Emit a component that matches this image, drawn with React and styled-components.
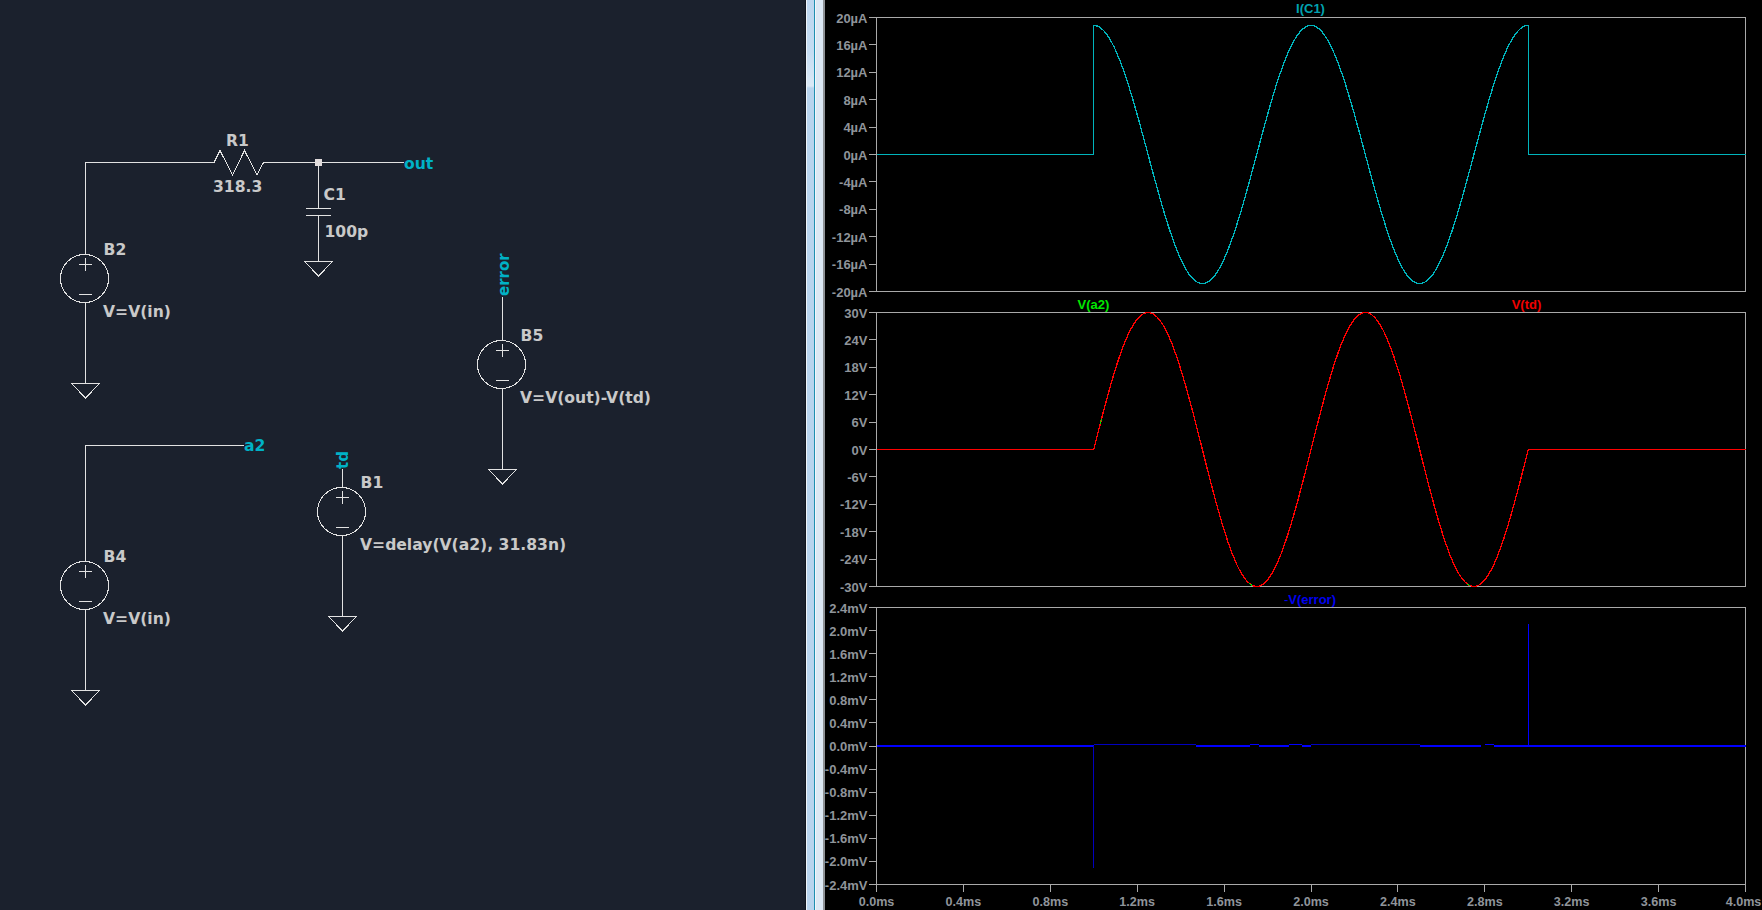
import React from 'react';
import styled, { createGlobalStyle } from 'styled-components';

const GlobalStyle = createGlobalStyle`
html, body {
  margin: 0;
  padding: 0;
  background: #000;
  overflow: hidden;
}
`
const Page = styled.div`
display: flex;
width: 100vw;
height: 100vh;
overflow: hidden;
`
const SchematicPane = styled.div`
flex: 0 0 805px;
background-color: #1b212d;
`
const Splitter = styled.div`
flex: 0 0 20px;
display: flex;
`
const Strip = styled.div`
flex: 0 0 ${p => p.$w}px;
background: ${p => p.$bg};
`
const PlotPane = styled.div`
flex: 1;
display: flex;
flex-direction: column;
background-color: #000;
`
const Drawing = styled.svg`
display: block;
overflow: visible;
`
const Wire = styled.polyline`
fill: none;
stroke: #e2e2e2;
stroke-width: 1;
shape-rendering: crispEdges;
`
const Outline = styled.circle`
fill: none;
stroke: #e2e2e2;
stroke-width: 1;
shape-rendering: crispEdges;
`
const Junction = styled.rect`
fill: #e2dcdc;
`
const PartLabel = styled.text`
font-family: "DejaVu Sans", sans-serif;
font-weight: 700;
font-size: 15.6px;
fill: #c9c9c9;
`
const NetLabel = styled(PartLabel)`
fill: #00b2c6;
`
const SideNetLabel = styled(NetLabel)`
font-size: 15px;
`
const FrameLine = styled.path`
fill: none;
stroke: #a9a9a9;
stroke-width: 1;
shape-rendering: crispEdges;
`
const TickLabel = styled.text`
font-family: "Liberation Sans", Arial, sans-serif;
font-weight: 700;
font-size: 13px;
fill: #8f949a;
text-anchor: end;
`
const TimeLabel = styled(TickLabel)`
font-size: 12.6px;
text-anchor: middle;
`
const TraceTitle = styled.text`
font-family: "Liberation Sans", Arial, sans-serif;
font-weight: 700;
font-size: 13px;
fill: ${p => p.$color};
text-anchor: middle;
`
const Trace = styled.polyline`
fill: none;
stroke: ${p => p.$color};
stroke-width: ${p => p.$w};
shape-rendering: crispEdges;
`

// schematic parts, x is the wire column
const Ground = ({ x, y }) => (
  <>
    <Wire points={`${x - 14},${y} ${x + 14},${y} ${x},${y + 14.5} ${x - 14},${y}`} />
  </>
)

const BSource = ({ x, y, top, bottom, name, value }) => (
  <>
    <Wire points={`${x},${top} ${x},${y - 24}`} />
    <Outline cx={x - 1} cy={y} r="24" />
    <Wire points={`${x - 6.5},${y - 14} ${x + 6.5},${y - 14}`} />
    <Wire points={`${x},${y - 20.5} ${x},${y - 7.5}`} />
    <Wire points={`${x - 6.5},${y + 16} ${x + 6.5},${y + 16}`} />
    <Wire points={`${x},${y + 24} ${x},${bottom}`} />
    <Ground x={x} y={bottom} />
    <PartLabel x={x + 18} y={y - 23.5}>{name}</PartLabel>
    <PartLabel x={x + 17.5} y={y + 38}>{value}</PartLabel>
  </>
)

const Schematic = () => (
  <Drawing width="805" height="910">
    <Wire points="85.5,254 85.5,162.5 214,162.5 220,150.5 232.5,175 244.5,150.5 257,175 263.5,162.5 404,162.5" />
    <Junction x="315" y="159" width="7" height="7" />
    <Wire points="318.5,162.5 318.5,208.5" />
    <Wire points="306,208.5 331,208.5" />
    <Wire points="306,215.5 331,215.5" />
    <Wire points="318.5,215.5 318.5,261.5" />
    <Ground x={318.5} y={261.5} />
    <PartLabel x="226" y="146">R1</PartLabel>
    <PartLabel x="213" y="192">318.3</PartLabel>
    <PartLabel x="323.5" y="200">C1</PartLabel>
    <PartLabel x="324.5" y="237">100p</PartLabel>
    <NetLabel x="404" y="169">out</NetLabel>
    <BSource x={85.5} y={278.5} top={254} bottom={383.5} name="B2" value="V=V(in)" />

    <Wire points="85.5,561 85.5,445.5 244,445.5" />
    <NetLabel x="244" y="451">a2</NetLabel>
    <BSource x={85.5} y={585.5} top={561} bottom={690.5} name="B4" value="V=V(in)" />

    <SideNetLabel x="347.5" y="469" transform="rotate(-90 347.5 469)">td</SideNetLabel>
    <BSource x={342.5} y={511.5} top={469} bottom={616.5} name="B1" value="V=delay(V(a2), 31.83n)" />

    <SideNetLabel x="508.5" y="296" transform="rotate(-90 508.5 296)">error</SideNetLabel>
    <BSource x={502.5} y={364.5} top={297} bottom={469.5} name="B5" value="V=V(out)-V(td)" />
  </Drawing>
)

// waveforms, t in ms
const FREQ = 2 * Math.PI
const sampled = (fn, from = 0, to = 4, n = 400) => {
  const pts = []
  for (let i = 0; i <= n; i++) {
    const t = from + (to - from) * i / n
    pts.push([t, fn(t)])
  }
  return pts
}
const currentWave = t => 18.85 * Math.cos(FREQ * (t - 1))
const voltageWave = t => 30 * Math.sin(FREQ * (t - 1))

const currentTicks = [20, 16, 12, 8, 4, 0, -4, -8, -12, -16, -20].map(v => ({ v, label: `${v}µA` }))
const voltTicks = [30, 24, 18, 12, 6, 0, -6, -12, -18, -24, -30].map(v => ({ v, label: `${v}V` }))
const errorTicks = [2.4, 2, 1.6, 1.2, 0.8, 0.4, 0, -0.4, -0.8, -1.2, -1.6, -2, -2.4].map(v => ({
  v, label: `${v < 0 ? '-' : ''}${Math.abs(v).toFixed(1)}mV`,
}))
const timeTicks = [0, 0.4, 0.8, 1.2, 1.6, 2, 2.4, 2.8, 3.2, 3.6, 4]

const AXIS_X = 51.5
const AXIS_W = 869
const PLOT_W = 937

const Plot = ({ header, frame, extra = 0, range, ticks, traces, titles, titleY, xAxis }) => {
  const toX = t => AXIS_X + t / 4 * AXIS_W
  const toY = v => header + 0.5 + (range - v) / (2 * range) * frame
  const bottom = header + 0.5 + frame
  const right = AXIS_X + AXIS_W
  return (
    <Drawing width={PLOT_W} height={header + frame + extra + 1}>
      <FrameLine d={`M${AXIS_X} ${header + 0.5}H${right}V${bottom}H${AXIS_X}Z`} />
      {ticks.map(({ v, label }) => (
        <React.Fragment key={label}>
          <FrameLine d={`M${AXIS_X - 8} ${Math.floor(toY(v)) + 0.5}H${AXIS_X}`} />
          <TickLabel x={AXIS_X - 9} y={toY(v) + 5}>{label}</TickLabel>
        </React.Fragment>
      ))}
      {xAxis && timeTicks.map(t => (
        <React.Fragment key={t}>
          <FrameLine d={`M${Math.floor(toX(t)) + 0.5} ${bottom}v7`} />
          <TimeLabel x={Math.min(toX(t), PLOT_W - 18.5)} y={bottom + 21}>{t.toFixed(1)}ms</TimeLabel>
        </React.Fragment>
      ))}
      {titles.map(({ text, x, color, prefix }) => (
        <TraceTitle key={text} $color={color} x={x} y={titleY}>
          {prefix && <tspan fontWeight="400">{prefix}</tspan>}
          {text}
        </TraceTitle>
      ))}
      {traces.map(({ color, points, w = 1 }, i) => (
        <Trace key={i} $color={color} $w={w} points={points.map(([t, v]) => `${toX(t).toFixed(1)},${toY(v).toFixed(1)}`).join(' ')} />
      ))}
    </Drawing>
  )
}

const TEAL = '#00b4bc'
const currentTraces = [
  { color: TEAL, points: [[0, 0], [1, 0], [1, 18.85]] },
  { color: TEAL, w: 1.3, points: sampled(currentWave, 1, 3, 200) },
  { color: TEAL, points: [[3, 18.85], [3, 0], [4, 0]] },
]

const RED = '#ff0000'
const voltageTraces = [
  { color: RED, points: [[0, 0], [1, 0]] },
  { color: RED, w: 1.3, points: sampled(voltageWave, 1, 3, 200) },
  { color: RED, points: [[3, 0], [4, 0]] },
  // V(a2) only shows through at a few spots under V(td)
  { color: '#00e000', points: sampled(voltageWave, 1.03, 1.036, 2) },
  { color: '#00e000', points: sampled(voltageWave, 1.715, 1.73, 3) },
  { color: '#00e000', points: sampled(voltageWave, 2.72, 2.73, 2) },
]

const BLUE = '#0000ff'
const DIM = '#0000c0'
const errorTraces = [
  { color: BLUE, w: 1.6, points: [[0, 0], [1, 0]] },
  { color: DIM, points: [[1, 0], [1, -2.12]] },
  { color: DIM, points: [[1, 0.022], [1.47, 0.022]] },
  { color: BLUE, w: 1.6, points: [[1.47, 0], [1.72, 0]] },
  { color: BLUE, points: [[1.72, 0.022], [1.76, 0.022]] },
  { color: BLUE, w: 1.6, points: [[1.76, 0], [1.9, 0]] },
  { color: BLUE, points: [[1.9, 0.022], [1.96, 0.022]] },
  { color: BLUE, w: 1.6, points: [[1.96, 0], [2.0, 0]] },
  { color: DIM, points: [[2.0, 0.022], [2.5, 0.022]] },
  { color: BLUE, w: 1.6, points: [[2.5, 0], [2.78, 0]] },
  { color: BLUE, points: [[2.8, 0.022], [2.84, 0.022]] },
  { color: BLUE, w: 1.6, points: [[2.84, 0], [4, 0]] },
  { color: BLUE, w: 1.6, points: [[3, 0], [3, 2.12]] },
]

export default function App() {
  return (
    <>
      <GlobalStyle />
      <Page>
        <SchematicPane>
          <Schematic />
        </SchematicPane>
        <Splitter>
          <Strip $w={1} $bg="#12161e" />
          <Strip $w={1} $bg="#eef4fa" />
          <Strip $w={7} $bg="linear-gradient(180deg, #bcd6ef 0, #c4dcf2 50px, #dbe9f6 86px, #b8d4ee 88px, #b8d4ee 100%)" />
          <Strip $w={1} $bg="#1e8fb0" />
          <Strip $w={1} $bg="#f2f6fb" />
          <Strip $w={7} $bg="#dce8f4" />
          <Strip $w={2} $bg="#8e9296" />
        </Splitter>
        <PlotPane>
          <Plot
            header={17} frame={274} range={20} ticks={currentTicks} titleY={13}
            titles={[{ text: 'I(C1)', x: 485.5, color: '#00a2b0' }]}
            traces={currentTraces}
          />
          <Plot
            header={20} frame={274} range={30} ticks={voltTicks} titleY={17}
            titles={[
              { text: 'V(a2)', x: 268.5, color: '#00e800' },
              { text: 'V(td)', x: 701.5, color: '#f00000' },
            ]}
            traces={voltageTraces}
          />
          <Plot
            header={20} frame={277} extra={26} range={2.4} ticks={errorTicks} titleY={17} xAxis
            titles={[{ text: 'V(error)', prefix: '-', x: 485, color: '#0000f0' }]}
            traces={errorTraces}
          />
        </PlotPane>
      </Page>
    </>
  );
}
